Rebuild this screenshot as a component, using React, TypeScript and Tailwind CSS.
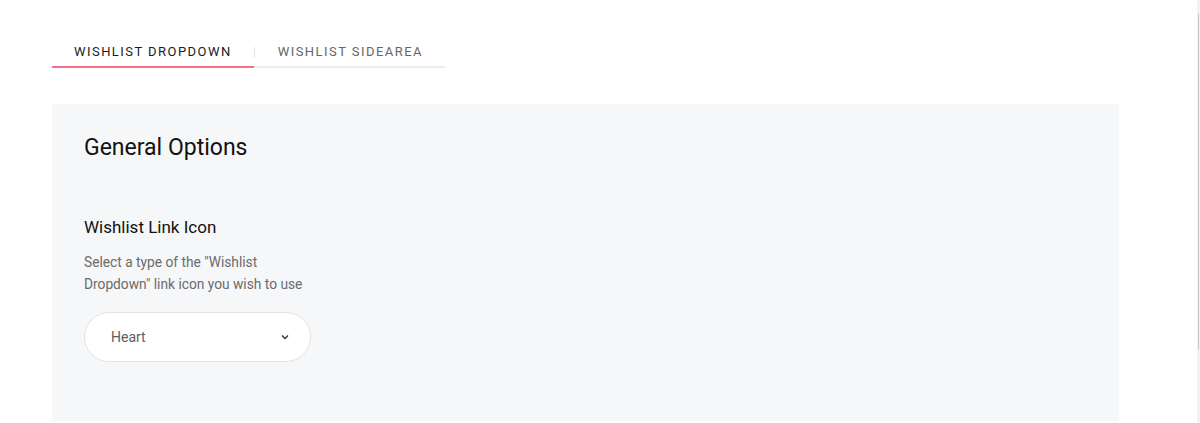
import { useState } from "react";

const tabs = ["Wishlist Dropdown", "Wishlist Sidearea"];

function Tabs() {
  const [active, setActive] = useState(0);

  return (
    <div className="flex w-[393px] border-b-2 border-[#ececec]">
      {tabs.map((tab, i) => (
        <div key={tab} className="flex shrink-0">
          {i > 0 && <span className="mt-[5px] h-[11px] w-px bg-[#e4e4e4]" />}
          <button
            onClick={() => setActive(i)}
            className={
              i === active
                ? "-mb-[2px] whitespace-nowrap border-b-2 border-[#f2708c] pl-[22px] pr-[22px] pb-[4px] text-[13px] leading-[20px] tracking-[1.45px] uppercase text-[#1c1c1c]"
                : "whitespace-nowrap pl-[23px] pr-[22px] pb-[4px] text-[13px] leading-[20px] tracking-[1.45px] uppercase text-[#666666]"
            }
          >
            {tab}
          </button>
        </div>
      ))}
    </div>
  );
}

function IconSelect() {
  return (
    <button className="mt-[17px] flex h-[50px] w-[227px] items-center justify-between rounded-full border border-[#e3e3e3] bg-white pl-[26px] pr-[21px]">
      <span className="text-[14px] text-[#5e5e5e]">Heart</span>
      <svg width="8" height="6" viewBox="0 0 8 6" fill="none">
        <path d="M1 1.5l3 3 3-3" stroke="#333" strokeWidth="1.4" />
      </svg>
    </button>
  );
}

export default function App() {
  return (
    <div className="flex h-[423px] overflow-hidden bg-white font-['Roboto',sans-serif]">
      <div className="flex-1 pl-[52px] pt-[42px]">
        <Tabs />

        <div className="mt-[36px] h-[317px] w-[1067px] bg-[#f6f7f9] px-[32px] pt-[28px]">
          <h2 className="text-[23px] leading-[32px] text-[#111]">General Options</h2>

          <h3 className="mt-[51px] text-[17px] leading-[24px] text-[#111]">
            Wishlist Link Icon
          </h3>
          <p className="mt-[12px] w-[230px] text-[13.75px] leading-[22px] text-[#6b6b6b]">
            Select a type of the "Wishlist Dropdown" link icon you wish to use
          </p>

          <IconSelect />
        </div>
      </div>

      <div className="w-[3px] bg-[#f2f2f2]">
        <div className="mx-auto mt-[14px] h-[336px] w-px bg-[#c6c6c6]" />
      </div>
    </div>
  );
}
